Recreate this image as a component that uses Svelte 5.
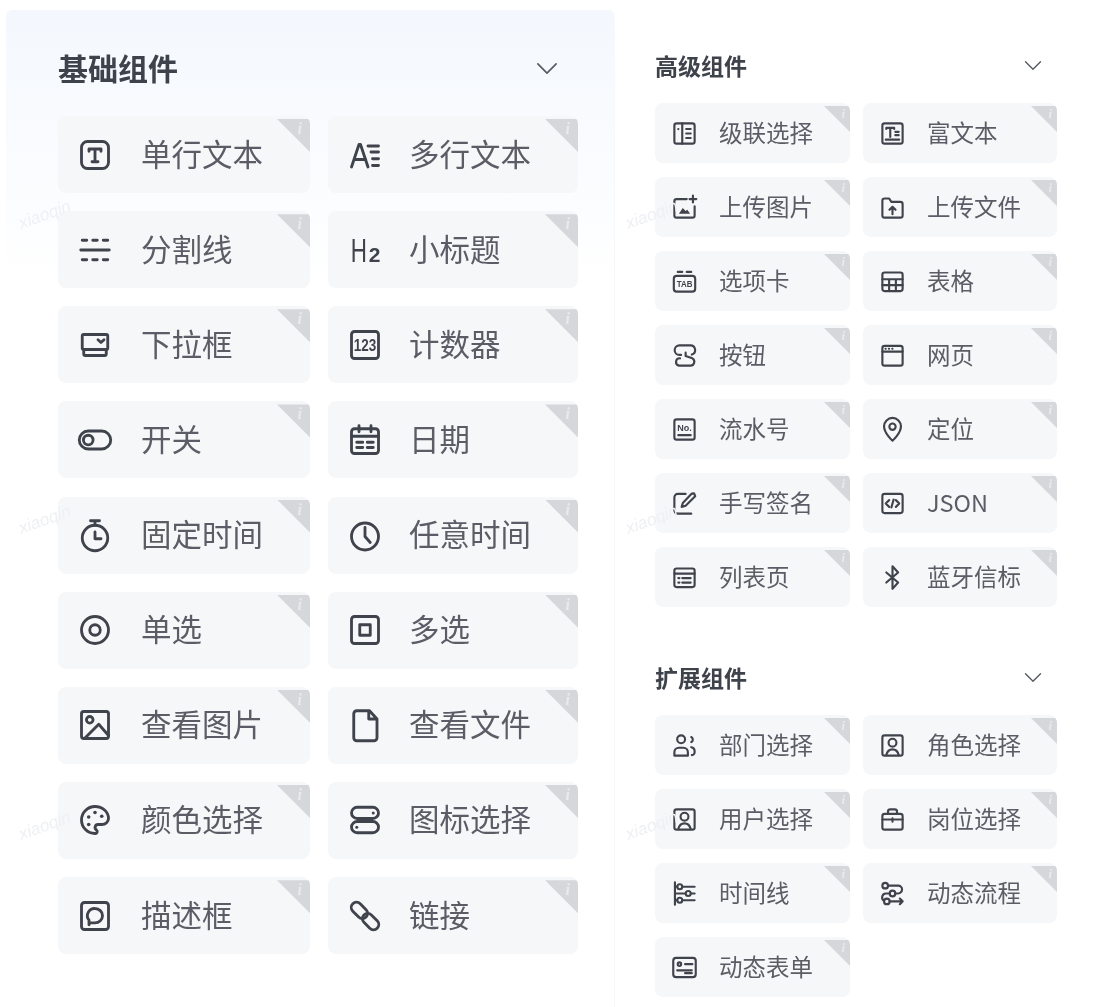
<script lang="ts">
  // icon bodies, all drawn on a 24x24 grid
  const icons: Record<string, string> = {
    text: '<rect x="3" y="3" width="18" height="18" rx="4"/><path d="M8 9.500V8h8v1.500M12 8v8.500M10 16.500h4"/>',
    multi: '<path d="M3 20 8 5h1l5 15M5 15h7.500M14 6h7M16 10h5M17 14.500h4M17 19h4"/>',
    divider: '<path d="M3.500 5.500h3M10.500 5.500h3M17.500 5.500h3M2.500 12h19M3.500 18.500h3M10.500 18.500h3M17.500 18.500h3"/>',
    h2: '<text transform="translate(2.500 20) scale(.68 1)" class="ic-t" font-size="22">H</text><text x="14.500" y="20" class="ic-t" font-size="14" font-weight="700">2</text>',
    select: '<rect x="3.500" y="5" width="17" height="10" rx="1"/><path d="M14 8.500l2 1.800 2-1.800M4.500 15v3a1 1 0 0 0 1 1h13a1 1 0 0 0 1-1v-3"/>',
    counter: '<rect x="3" y="3" width="18" height="18" rx="2"/><text x="12" y="16" text-anchor="middle" class="ic-t" font-size="11" font-weight="700" textLength="15" lengthAdjust="spacingAndGlyphs">123</text>',
    toggle: '<rect x="1.500" y="6" width="21" height="12" rx="6"/><circle cx="7.500" cy="12" r="3.200"/>',
    date: '<rect x="3" y="4.500" width="18" height="16.500" rx="2"/><path d="M8 2.500v4M16 2.500v4M3 9.500h18M6.500 13.500h4M13.500 13.500h4M6.500 17h4M13.500 17h4"/>',
    timer: '<circle cx="12" cy="14" r="8.500"/><path d="M9 2.500h6M12 2.500v3M12 10v4.500h4"/>',
    clock: '<circle cx="12" cy="13" r="9"/><path d="M12 7v6l3.500 4"/>',
    radio: '<circle cx="12" cy="12" r="9"/><circle cx="12" cy="12" r="3.500"/>',
    check: '<rect x="3" y="3" width="18" height="18" rx="2"/><rect x="8.500" y="8.500" width="7" height="7"/>',
    image: '<rect x="3" y="3" width="18" height="18" rx="1.500"/><circle cx="8.500" cy="8.500" r="2.200"/><path d="M5 21l9.500-9.500L21 19"/>',
    file: '<path d="M4.500 4.500a2 2 0 0 1 2-2H15l5 5.500v12.500a2 2 0 0 1-2 2H6.500a2 2 0 0 1-2-2zM14.500 2.500V8H20"/>',
    palette: '<path d="M12 21a9 9 0 0 1 0-18c5 0 9 3.600 9 8 0 1-.5 2-1.300 2.800-.8.800-2 1.200-3.200 1.200h-2.500a2 2 0 0 0-1 3.700 1.300 1.300 0 0 1-1 2.300z"/><circle cx="7.800" cy="10" r="1.200" class="ic-f"/><circle cx="12" cy="7" r="1.200" class="ic-f"/><circle cx="16.500" cy="9.500" r="1.200" class="ic-f"/><circle cx="7.800" cy="15" r="1.200" class="ic-f"/>',
    pills: '<rect x="3" y="3.500" width="18" height="7.500" rx="3.750"/><rect x="3" y="13" width="18" height="7.500" rx="3.750"/><circle cx="17.500" cy="7.250" r="1" class="ic-f"/><circle cx="6.500" cy="16.750" r="1" class="ic-f"/>',
    note: '<rect x="3" y="3" width="18" height="18" rx="2"/><path d="M12 7a5 4.800 0 0 1 0 9.600h-3.500l-.5 1.200v-3A4.800 4.800 0 0 1 12 7z"/>',
    link: '<g transform="rotate(45 12 12)"><rect x=".5" y="8.500" width="12.500" height="7" rx="3.500"/><rect x="11" y="8.500" width="12.500" height="7" rx="3.500"/></g>',
    cascade: '<rect x="3" y="3" width="18" height="18" rx="2"/><path d="M10 3v18M13.500 8h4M13.500 12h4M13.500 16h4"/><circle cx="6.500" cy="8" r="1" class="ic-f"/>',
    rich: '<rect x="3" y="3" width="18" height="18" rx="2"/><path d="M6.500 8V7h7v1M10 7v8M14.500 10.500h3M14.500 13.500h3M6 17.500h12"/>',
    upimg: '<path d="M14 4.500H5a2 2 0 0 0-2 2V19a2 2 0 0 0 2 2h14a2 2 0 0 0 2-2v-8M19.500 1.500v6M16.500 4.500h6"/><path d="M7 17.500l3.500-5 2.500 2.500 1.500-1 2.500 3.500z" class="ic-f"/>',
    upfile: '<path d="M3 6a2 2 0 0 1 2-2h4l2 3h8a2 2 0 0 1 2 2v10a2 2 0 0 1-2 2H5a2 2 0 0 1-2-2zM12 18v-6.500M9.300 14L12 11.300 14.700 14"/>',
    tab: '<rect x="2.500" y="7" width="19" height="14" rx="2.500"/><path d="M6 3.500h4M14 3.500h4"/><text x="12" y="16.800" text-anchor="middle" class="ic-t" font-size="7.500" font-weight="700" textLength="14" lengthAdjust="spacingAndGlyphs">TAB</text>',
    table: '<rect x="3" y="4" width="18" height="16.500" rx="2"/><path d="M3 10h18M3 15.200h18M9 10v10.500M15 10v10.500"/>',
    button: '<path d="M9 11.500H7.500a4.200 4.200 0 0 1 0-8.500h9.500a4.200 4.200 0 0 1 1.500 8.200M8 14.500a3.300 3.300 0 0 0-1 6.500h10a3.500 3.500 0 0 0 2-6.500l-6-2V9.500"/>',
    web: '<rect x="3" y="3.500" width="18" height="17.500" rx="2"/><path d="M3 8.500h18M5.800 6h.2M8.800 6h.2M11.800 6h.2"/>',
    serial: '<rect x="3" y="3" width="18" height="18" rx="2"/><text x="12" y="13.500" text-anchor="middle" class="ic-t" font-size="8" font-weight="700">No.</text><path d="M6.500 17h11"/>',
    pin: '<path d="M12 22s-7.500-6.500-7.500-12.800a7.500 7.500 0 0 1 15 0C19.500 15.500 12 22 12 22z"/><circle cx="12" cy="9.500" r="2.800"/>',
    sign: '<path d="M13 3.500H6a3 3 0 0 0-3 3V18a3 3 0 0 0 3 3h12M20.500 3 21.500 5.500 13 14l-3.500 1 1-3.500L18.500 3.200z"/>',
    json: '<rect x="3" y="3.500" width="18" height="17" rx="2"/><path d="M9 9l-3 3 3 3M15 9l3 3-3 3M13 8.500l-2 7"/>',
    list: '<rect x="3" y="4" width="18" height="16.500" rx="2"/><path d="M3 8.500h18M6.500 12.500h1M10 12.500h7.500M6.500 16.500h1M10 16.500h7.500"/>',
    ble: '<path d="M6.500 7.500 17 16.500l-5 5.500V2l5 5.500L6.500 16.500"/>',
    dept: '<circle cx="9" cy="6.500" r="3.500"/><path d="M3 18a4 4 0 0 1 4-4h4a4 4 0 0 1 4 4v3H3zM18 4.500a2.500 2.500 0 0 1 0 4.500M18 13.500a3.500 3.500 0 0 1 3 3.500v1a2.500 2.500 0 0 1-2.500 2.500"/>',
    person: '<rect x="3" y="3" width="18" height="18" rx="2"/><circle cx="12" cy="9.500" r="3.500"/><path d="M6.500 20.500c.8-3.300 3-5 5.500-5s4.700 1.700 5.500 5"/>',
    case: '<rect x="3" y="7" width="18" height="14" rx="2"/><path d="M8 7V5a2 2 0 0 1 2-2h4a2 2 0 0 1 2 2v2M3 12h18M12 11v3"/>',
    line: '<path d="M3.500 2v20M3.500 6h2M10 6h11M3.500 12h9M18 12h3M3.500 18h2M10 18h11"/><circle cx="7.800" cy="6" r="2.200"/><circle cx="15.300" cy="12" r="2.200"/><circle cx="7.800" cy="18" r="2.200"/>',
    flow: '<circle cx="5.500" cy="5" r="2.500"/><circle cx="12" cy="12" r="2.500"/><circle cx="7" cy="19" r="2.500"/><path d="M8 5h9a3.500 3.500 0 0 1 0 7h-2.500M9.500 12H6a3.500 3.500 0 0 0-1.500 6.500M9.500 19H21M18.500 16.500 21 19l-2.500 2.500"/>',
    form: '<rect x="2" y="3.500" width="20" height="17" rx="2.500"/><circle cx="7.500" cy="9" r="1.500"/><path d="M12.500 9H19M5.500 14.500h13M12.500 17h6"/>',
  };

  const basic = [
    ['单行文本', 'text'], ['多行文本', 'multi'], ['分割线', 'divider'], ['小标题', 'h2'],
    ['下拉框', 'select'], ['计数器', 'counter'], ['开关', 'toggle'], ['日期', 'date'],
    ['固定时间', 'timer'], ['任意时间', 'clock'], ['单选', 'radio'], ['多选', 'check'],
    ['查看图片', 'image'], ['查看文件', 'file'], ['颜色选择', 'palette'], ['图标选择', 'pills'],
    ['描述框', 'note'], ['链接', 'link'],
  ];
  const advanced = [
    ['级联选择', 'cascade'], ['富文本', 'rich'], ['上传图片', 'upimg'], ['上传文件', 'upfile'],
    ['选项卡', 'tab'], ['表格', 'table'], ['按钮', 'button'], ['网页', 'web'],
    ['流水号', 'serial'], ['定位', 'pin'], ['手写签名', 'sign'], ['JSON', 'json'],
    ['列表页', 'list'], ['蓝牙信标', 'ble'],
  ];
  const extended = [
    ['部门选择', 'dept'], ['角色选择', 'person'], ['用户选择', 'person'], ['岗位选择', 'case'],
    ['时间线', 'line'], ['动态流程', 'flow'], ['动态表单', 'form'],
  ];

  // watermark stamps, they sit over the page on a free canvas
  const marks = [
    [18, 205], [18, 510], [18, 816], [625, 205], [625, 510], [625, 816],
  ];
</script>

{#snippet card(label: string, icon: string)}
  <div class="card">
    <svg class="icon" viewBox="0 0 24 24" aria-hidden="true">{@html icons[icon]}</svg>
    <span class="label">{label}</span>
    <span class="corner"></span>
    <span class="corner-i">i</span>
  </div>
{/snippet}

{#snippet chevron()}
  <svg class="chev" viewBox="0 0 24 14" aria-hidden="true"><path d="M2 2l10 10L22 2" /></svg>
{/snippet}

<div class="page">
  <section class="panel big">
    <header class="head">
      <h2>基础组件</h2>
      {@render chevron()}
    </header>
    <div class="grid">
      {#each basic as [label, icon]}
        {@render card(label, icon)}
      {/each}
    </div>
  </section>

  <div class="side">
    <section class="panel small">
      <header class="head">
        <h2>高级组件</h2>
        {@render chevron()}
      </header>
      <div class="grid">
        {#each advanced as [label, icon]}
          {@render card(label, icon)}
        {/each}
      </div>
    </section>
    <section class="panel small">
      <header class="head">
        <h2>扩展组件</h2>
        {@render chevron()}
      </header>
      <div class="grid">
        {#each extended as [label, icon]}
          {@render card(label, icon)}
        {/each}
      </div>
    </section>
  </div>

  {#each marks as [x, y]}
    <span class="mark" style="left:{x}px;top:{y}px">xiaoqin</span>
  {/each}
</div>

<style>
  :global(body) {
    background: #fff;
  }
  .page {
    position: relative;
    display: flex;
    align-items: stretch;
    width: 1098px;
    height: 1007px;
    overflow: hidden;
    box-sizing: border-box;
    padding: 10px 0 0 6px;
    font-family: "Noto Sans CJK SC", "Noto Sans", sans-serif;
    filter: blur(0.5px);
  }

  .big {
    box-sizing: border-box;
    width: 609px;
    padding: 44px 0 0 52px;
    border-right: 1px solid #f7f8fa;
    border-radius: 6px 6px 0 0;
    background: linear-gradient(180deg, #f4f8fe 0, #f9fbfe 130px, #fff 270px);
  }
  .side {
    display: flex;
    flex-direction: column;
    gap: 59px;
    padding: 44px 0 0 40px;
  }

  .head {
    display: flex;
    align-items: center;
    justify-content: space-between;
  }
  .head h2 {
    margin: 0;
    font-weight: 700;
    color: #3e424b;
  }
  .chev {
    display: block;
    fill: none;
    stroke: #565a62;
    stroke-width: 1.8;
    stroke-linecap: round;
    stroke-linejoin: round;
  }
  .big .head {
    width: 500px;
    height: 30px;
    margin-bottom: 32px;
  }
  .big .head h2 {
    font-size: 30px;
    line-height: 30px;
    margin-top: -4px;
  }
  .big .chev {
    width: 22px;
    height: 13px;
    margin-top: -2px;
  }
  .small .head {
    width: 387px;
    height: 26px;
    margin-bottom: 23px;
  }
  .small .head h2 {
    font-size: 23px;
    line-height: 26px;
    margin-top: -4px;
  }
  .small .chev {
    width: 18px;
    height: 11px;
    margin-top: -3px;
  }

  .grid {
    display: grid;
  }
  .big .grid {
    grid-template-columns: 252px 250px;
    grid-auto-rows: 77px;
    gap: 18.15px 18px;
  }
  .small .grid {
    grid-template-columns: 195px 194px;
    grid-auto-rows: 60px;
    gap: 14px 13px;
  }

  .card {
    position: relative;
    display: flex;
    align-items: center;
    overflow: hidden;
    border-radius: 8px;
    background: #f6f7f9;
  }
  .big .card {
    padding-left: 19px;
  }
  .small .card {
    padding-left: 15.5px;
  }
  .icon {
    flex: none;
    fill: none;
    stroke: #3f434c;
    stroke-width: 1.9;
    stroke-linecap: round;
    stroke-linejoin: round;
  }
  .big .icon {
    width: 36px;
    height: 36px;
    margin-right: 28px;
  }
  .small .icon {
    width: 27px;
    height: 27px;
    margin-right: 21.5px;
  }
  .icon :global(.ic-f) {
    fill: #3f434c;
    stroke: none;
  }
  .icon :global(.ic-t) {
    fill: #3f434c;
    stroke: none;
    font-family: "Liberation Sans", sans-serif;
  }

  .label {
    color: #5a5d65;
    white-space: nowrap;
  }
  .big .label {
    font-size: 30.500px;
    line-height: 40px;
    margin-top: -4px;
  }
  .big .card:nth-child(even) .label {
    margin-left: -2px;
  }
  .small .label {
    font-size: 23.500px;
    line-height: 32px;
    margin-top: -2px;
  }

  /* grey info flag in the card corner */
  .corner {
    position: absolute;
    top: 3px;
    right: 0;
    background: #d5d7db;
    clip-path: polygon(0 0, 100% 0, 100% 100%);
  }
  .big .corner {
    width: 33px;
    height: 33px;
  }
  .small .corner {
    width: 26px;
    height: 26px;
  }
  .corner-i {
    position: absolute;
    font-family: "Liberation Serif", serif;
    font-style: italic;
    font-weight: 700;
    color: #e8eaed;
    line-height: 1;
  }
  .big .corner-i {
    top: 5px;
    right: 8px;
    font-size: 16px;
  }
  .small .corner-i {
    top: 4px;
    right: 5px;
    font-size: 13px;
  }

  .mark {
    position: absolute;
    font-family: "Liberation Sans", sans-serif;
    font-size: 17px;
    font-style: italic;
    color: #eef0f4;
    transform: rotate(-20deg);
    pointer-events: none;
  }
</style>
